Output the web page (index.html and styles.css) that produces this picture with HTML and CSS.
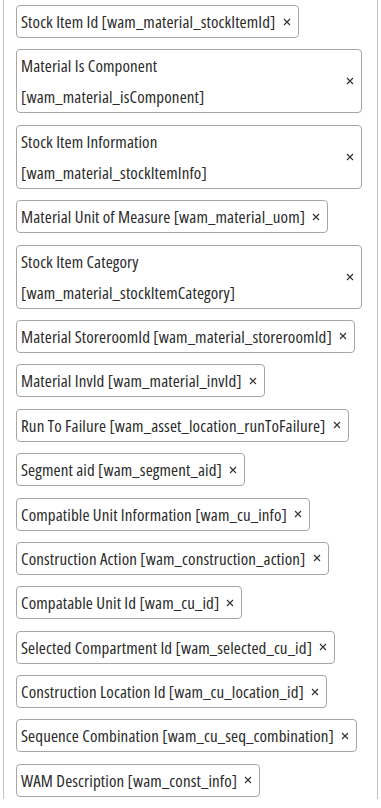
FILE: index.html
```html
<!DOCTYPE html>
<html lang="en">
<head>
    <meta charset="utf-8" />
    <title>Selected fields</title>
    <link rel="stylesheet" href="styles.css">
</head>
<body>
<div class="panel">
    <ul class="chips">
        <li class="chip"><span class="label">Stock Item Id [wam_material_stockItemId]</span><button type="button" class="remove" aria-label="Remove"><svg viewBox="0 0 8 8"><path d="M1 1L7 7M7 1L1 7"/></svg></button></li>
        <li class="chip"><span class="label">Material Is Component [wam_material_isComponent]</span><button type="button" class="remove" aria-label="Remove"><svg viewBox="0 0 8 8"><path d="M1 1L7 7M7 1L1 7"/></svg></button></li>
        <li class="chip"><span class="label">Stock Item Information [wam_material_stockItemInfo]</span><button type="button" class="remove" aria-label="Remove"><svg viewBox="0 0 8 8"><path d="M1 1L7 7M7 1L1 7"/></svg></button></li>
        <li class="chip"><span class="label">Material Unit of Measure [wam_material_uom]</span><button type="button" class="remove" aria-label="Remove"><svg viewBox="0 0 8 8"><path d="M1 1L7 7M7 1L1 7"/></svg></button></li>
        <li class="chip"><span class="label">Stock Item Category [wam_material_stockItemCategory]</span><button type="button" class="remove" aria-label="Remove"><svg viewBox="0 0 8 8"><path d="M1 1L7 7M7 1L1 7"/></svg></button></li>
        <li class="chip"><span class="label">Material StoreroomId [wam_material_storeroomId]</span><button type="button" class="remove" aria-label="Remove"><svg viewBox="0 0 8 8"><path d="M1 1L7 7M7 1L1 7"/></svg></button></li>
        <li class="chip"><span class="label">Material InvId [wam_material_invId]</span><button type="button" class="remove" aria-label="Remove"><svg viewBox="0 0 8 8"><path d="M1 1L7 7M7 1L1 7"/></svg></button></li>
        <li class="chip"><span class="label">Run To Failure [wam_asset_location_runToFailure]</span><button type="button" class="remove" aria-label="Remove"><svg viewBox="0 0 8 8"><path d="M1 1L7 7M7 1L1 7"/></svg></button></li>
        <li class="chip"><span class="label">Segment aid [wam_segment_aid]</span><button type="button" class="remove" aria-label="Remove"><svg viewBox="0 0 8 8"><path d="M1 1L7 7M7 1L1 7"/></svg></button></li>
        <li class="chip"><span class="label">Compatible Unit Information [wam_cu_info]</span><button type="button" class="remove" aria-label="Remove"><svg viewBox="0 0 8 8"><path d="M1 1L7 7M7 1L1 7"/></svg></button></li>
        <li class="chip"><span class="label">Construction Action [wam_construction_action]</span><button type="button" class="remove" aria-label="Remove"><svg viewBox="0 0 8 8"><path d="M1 1L7 7M7 1L1 7"/></svg></button></li>
        <li class="chip"><span class="label">Compatable Unit Id [wam_cu_id]</span><button type="button" class="remove" aria-label="Remove"><svg viewBox="0 0 8 8"><path d="M1 1L7 7M7 1L1 7"/></svg></button></li>
        <li class="chip"><span class="label">Selected Compartment Id [wam_selected_cu_id]</span><button type="button" class="remove" aria-label="Remove"><svg viewBox="0 0 8 8"><path d="M1 1L7 7M7 1L1 7"/></svg></button></li>
        <li class="chip"><span class="label">Construction Location Id [wam_cu_location_id]</span><button type="button" class="remove" aria-label="Remove"><svg viewBox="0 0 8 8"><path d="M1 1L7 7M7 1L1 7"/></svg></button></li>
        <li class="chip"><span class="label">Sequence Combination [wam_cu_seq_combination]</span><button type="button" class="remove" aria-label="Remove"><svg viewBox="0 0 8 8"><path d="M1 1L7 7M7 1L1 7"/></svg></button></li>
        <li class="chip"><span class="label">WAM Description [wam_const_info]</span><button type="button" class="remove" aria-label="Remove"><svg viewBox="0 0 8 8"><path d="M1 1L7 7M7 1L1 7"/></svg></button></li>
    </ul>
</div>
</body>
</html>
```

FILE: styles.css
```css
body{margin:0;background:#fff;font-family:"Open Sans",sans-serif;font-stretch:75%;color:#2a2a2a;}
.panel{margin:0 3px;height:799px;box-sizing:border-box;border-left:1px solid #c4c4c4;border-right:1px solid #c4c4c4;padding:5px 15px 0 12px;}
.chips{list-style:none;margin:0;padding:0;display:flex;flex-direction:column;align-items:flex-start;gap:11.4px;}
.chip{display:flex;align-items:center;max-width:100%;box-sizing:border-box;border:1px solid #a6a6a6;border-radius:4px;padding:0 7px 0 4px;font-size:17px;letter-spacing:0.12px;line-height:31px;}
.label{flex:1 1 auto;}
.remove{flex:none;display:flex;margin:0 0 0 7px;padding:0;border:0;background:none;}
.remove svg{width:8px;height:8px;stroke:#333;stroke-width:1.15;fill:none;}
```
